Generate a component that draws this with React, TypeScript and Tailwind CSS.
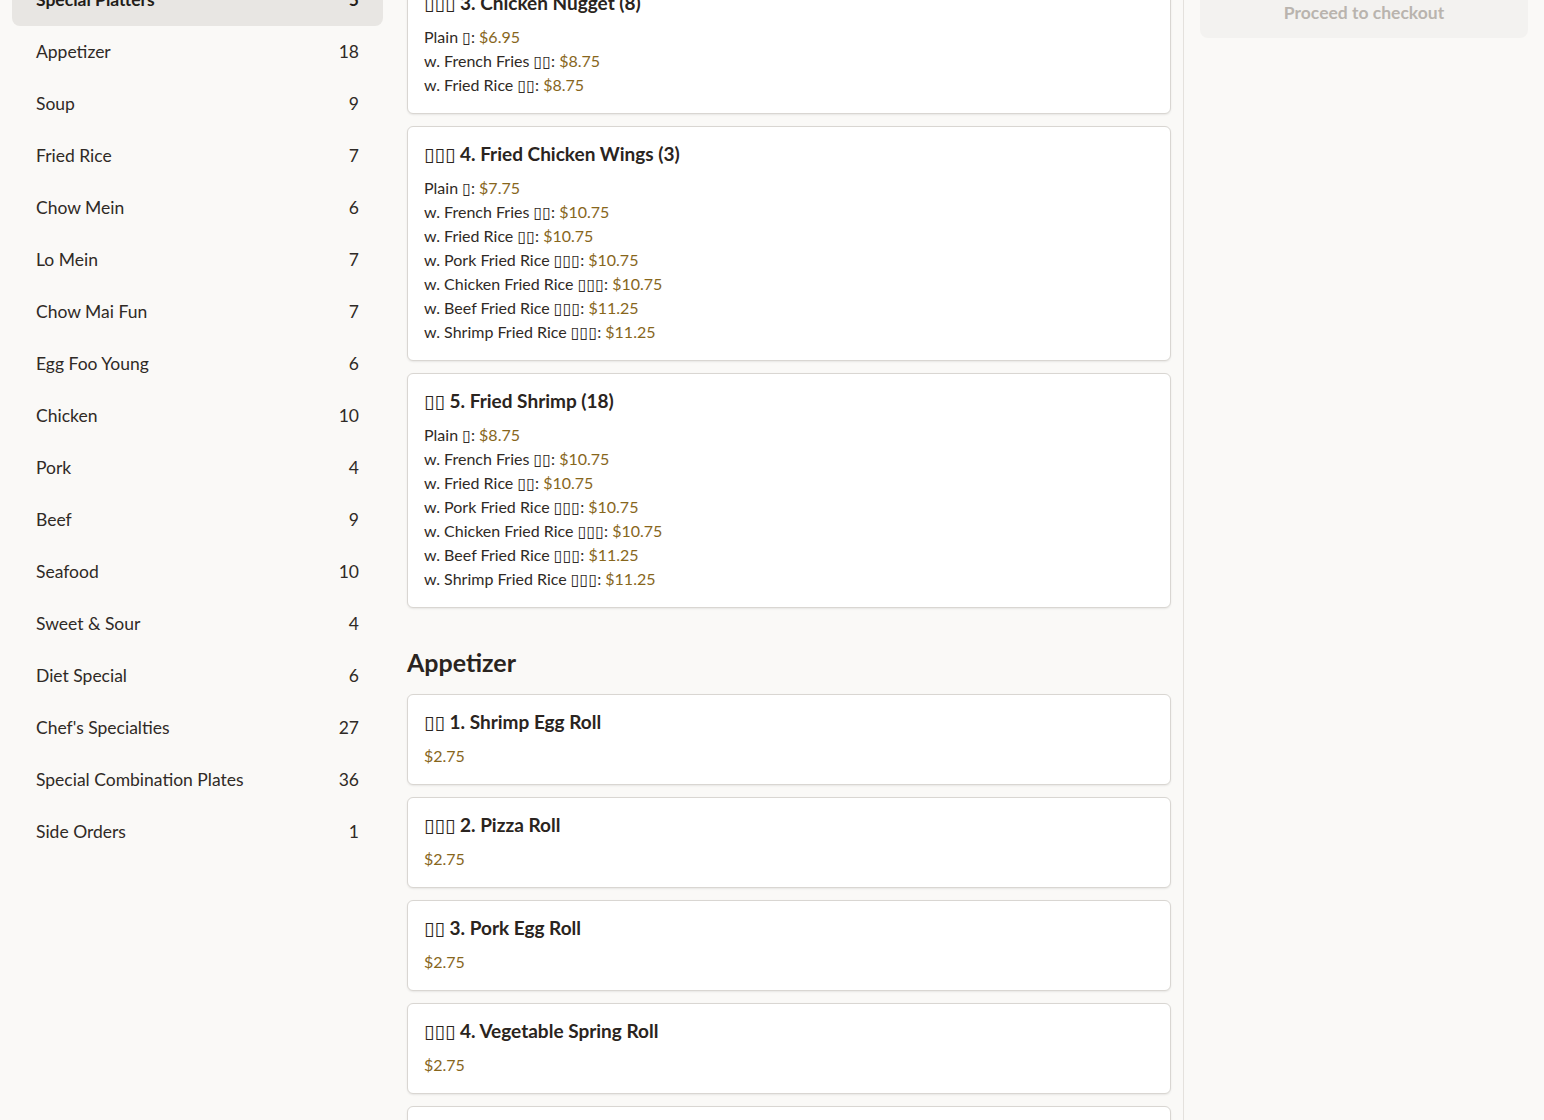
import React from "react";

const T = (n: number) => "▯".repeat(n);

type Opt = { label: string; price: string };
type Item = { title: string; price?: string; options?: Opt[] };

const riceOpts = (plain: string, a: string, b: string): Opt[] => [
  { label: `Plain ${T(1)}`, price: plain },
  { label: `w. French Fries ${T(2)}`, price: a },
  { label: `w. Fried Rice ${T(2)}`, price: a },
  { label: `w. Pork Fried Rice ${T(3)}`, price: a },
  { label: `w. Chicken Fried Rice ${T(3)}`, price: a },
  { label: `w. Beef Fried Rice ${T(3)}`, price: b },
  { label: `w. Shrimp Fried Rice ${T(3)}`, price: b },
];

const platters: Item[] = [
  {
    title: `${T(3)} 3. Chicken Nugget (8)`,
    options: [
      { label: `Plain ${T(1)}`, price: "$6.95" },
      { label: `w. French Fries ${T(2)}`, price: "$8.75" },
      { label: `w. Fried Rice ${T(2)}`, price: "$8.75" },
    ],
  },
  { title: `${T(3)} 4. Fried Chicken Wings (3)`, options: riceOpts("$7.75", "$10.75", "$11.25") },
  { title: `${T(2)} 5. Fried Shrimp (18)`, options: riceOpts("$8.75", "$10.75", "$11.25") },
];

const appetizers: Item[] = [
  { title: `${T(2)} 1. Shrimp Egg Roll`, price: "$2.75" },
  { title: `${T(3)} 2. Pizza Roll`, price: "$2.75" },
  { title: `${T(2)} 3. Pork Egg Roll`, price: "$2.75" },
  { title: `${T(3)} 4. Vegetable Spring Roll`, price: "$2.75" },
  { title: `${T(2)} 5. Chicken Egg Roll`, price: "$2.75" },
];

const categories: [string, number][] = [
  ["Special Platters", 5],
  ["Appetizer", 18],
  ["Soup", 9],
  ["Fried Rice", 7],
  ["Chow Mein", 6],
  ["Lo Mein", 7],
  ["Chow Mai Fun", 7],
  ["Egg Foo Young", 6],
  ["Chicken", 10],
  ["Pork", 4],
  ["Beef", 9],
  ["Seafood", 10],
  ["Sweet & Sour", 4],
  ["Diet Special", 6],
  ["Chef's Specialties", 27],
  ["Special Combination Plates", 36],
  ["Side Orders", 1],
];

function Card({ item }: { item: Item }) {
  return (
    <div className="rounded-md border border-[#d9d6d2] bg-white p-4 shadow-[0_1px_2px_rgba(0,0,0,0.08)]">
      <div className="mb-[11px] text-[19px] font-bold leading-[22px] text-[#2a2420]">{item.title}</div>
      {item.options ? (
        <div className="flex flex-col">
          {item.options.map((o, i) => (
            <div key={i} className="text-[16px] leading-6 text-[#2f2a26]">
              {o.label}: <span className="text-[#87661c]">{o.price}</span>
            </div>
          ))}
        </div>
      ) : (
        <div className="text-[16px] leading-6 text-[#87661c]">{item.price}</div>
      )}
    </div>
  );
}

export default function App() {
  return (
    <div
      className="flex h-[1120px] overflow-hidden bg-[#faf9f7] text-[#2a2420]"
      style={{ fontFamily: "Lato, 'DejaVu Sans', sans-serif" }}
    >
      <aside className="w-[395px] shrink-0 px-3">
        <div className="-mt-[26px] flex flex-col">
          {categories.map(([name, n], i) => (
            <div
              key={name}
              className={
                i === 0
                  ? "flex h-[52px] items-center justify-between rounded-lg bg-[#e8e6e3] px-6 text-[17.5px] font-bold text-[#231d19]"
                  : "flex h-[52px] items-center justify-between rounded-lg px-6 text-[17.5px] text-[#2f2a26]"
              }
            >
              <span>{name}</span>
              <span>{n}</span>
            </div>
          ))}
        </div>
      </aside>

      <main className="flex-1 border-r border-[#e4e1dd] px-3">
        <div className="-mt-[25px] flex flex-col gap-3">
          {platters.map((it, i) => (
            <Card key={i} item={it} />
          ))}
        </div>
        <h2 className="mb-4 mt-[38px] text-[25px] font-bold leading-8 text-[#2a2420]">Appetizer</h2>
        <div className="flex flex-col gap-3">
          {appetizers.map((it, i) => (
            <Card key={i} item={it} />
          ))}
        </div>
      </main>

      <section className="w-[360px] shrink-0 px-4">
        <button className="-mt-[10px] block h-12 w-full rounded-lg bg-[#f3f2f0] pb-0.5 text-[17.5px] font-bold text-[#b9b4ae]">
          Proceed to checkout
        </button>
      </section>
    </div>
  );
}
